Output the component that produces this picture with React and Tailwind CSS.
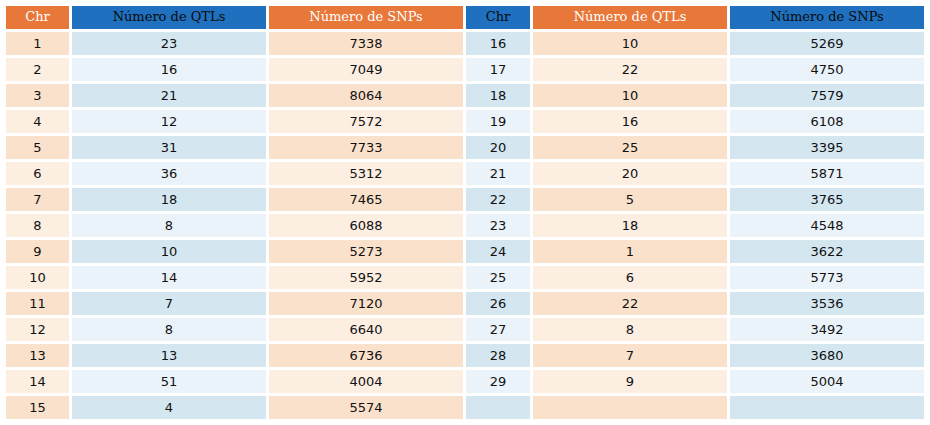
import React from "react";

const left = [
  [1, 23, 7338], [2, 16, 7049], [3, 21, 8064], [4, 12, 7572], [5, 31, 7733],
  [6, 36, 5312], [7, 18, 7465], [8, 8, 6088], [9, 10, 5273], [10, 14, 5952],
  [11, 7, 7120], [12, 8, 6640], [13, 13, 6736], [14, 51, 4004], [15, 4, 5574],
];
const right = [
  [16, 10, 5269], [17, 22, 4750], [18, 10, 7579], [19, 16, 6108], [20, 25, 3395],
  [21, 20, 5871], [22, 5, 3765], [23, 18, 4548], [24, 1, 3622], [25, 6, 5773],
  [26, 22, 3536], [27, 8, 3492], [28, 7, 3680], [29, 9, 5004], ["", "", ""],
];

const headers = ["Chr", "Número de QTLs", "Número de SNPs", "Chr", "Número de QTLs", "Número de SNPs"];

export default function App() {
  const rows = left.map((l, i) => [...l, ...right[i]]);
  return (
    <div className="w-[930px] h-[425px] bg-white p-[6px]">
      <div
        className="grid grid-cols-[63px_194px_194px_64px_194px_194px] gap-[3px]"
        style={{ gridAutoRows: "23px" }}
      >
        {headers.map((h, c) => (
          <div
            key={"h" + c}
            className={
              "flex items-center justify-center pb-px text-[13px] font-['DejaVu_Serif',serif] " +
              (c % 2 === 0 ? "bg-[#e8773a] text-white" : "bg-[#1f70be] text-[#0a0a0a]")
            }
          >
            {h}
          </div>
        ))}
        {rows.map((r, i) =>
          r.map((v, c) => {
            const orange = c % 2 === 0;
            const odd = i % 2 === 0;
            const bg = orange
              ? odd
                ? "bg-[#fae1cb]"
                : "bg-[#fdeee2]"
              : odd
              ? "bg-[#d4e7f1]"
              : "bg-[#ebf3fa]";
            return (
              <div
                key={i + "-" + c}
                className={
                  "flex items-center justify-center text-[13px] text-[#111] font-['DejaVu_Sans',sans-serif] " +
                  bg
                }
              >
                {v}
              </div>
            );
          })
        )}
      </div>
    </div>
  );
}
